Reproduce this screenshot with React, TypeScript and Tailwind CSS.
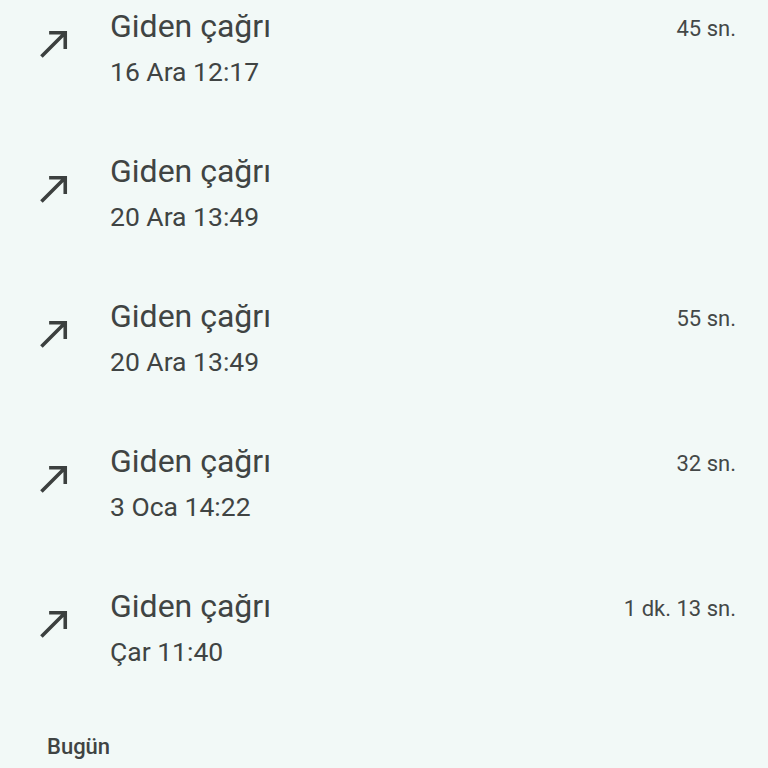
import React from "react";

type Call = {
  date: string;
  duration?: string;
};

const calls: Call[] = [
  { date: "16 Ara 12:17", duration: "45 sn." },
  { date: "20 Ara 13:49" },
  { date: "20 Ara 13:49", duration: "55 sn." },
  { date: "3 Oca 14:22", duration: "32 sn." },
  { date: "Çar 11:40", duration: "1 dk. 13 sn." },
];

const OutgoingIcon = () => (
  <svg viewBox="0 0 24 24" className="w-[43px] h-[43px]" fill="#3c403f">
    <path d="M9 5v2h6.59L4 18.59 5.41 20 17 8.41V15h2V5z" />
  </svg>
);

const App: React.FC = () => {
  return (
    <div
      className="w-[768px] h-[768px] overflow-hidden bg-[#f2f9f7] text-[#404443]"
      style={{ fontFamily: "Roboto, 'Noto Sans', sans-serif" }}
    >
      <div className="-mt-[24px]">
        {calls.map((call, index) => (
          <div
            key={index}
            className="flex items-start h-[145px] pt-[32px] pl-[33px] pr-[32px]"
          >
            <div className="mt-[14px] shrink-0">
              <OutgoingIcon />
            </div>
            <div className="ml-[34px] flex-1">
              <p className="text-[32px] leading-[36px]">Giden çağrı</p>
              <p className="text-[26.5px] leading-[30px] mt-[13px]">{call.date}</p>
            </div>
            {call.duration && (
              <p className="text-[22px] leading-[28px] mt-[7px] text-[#444847]">
                {call.duration}
              </p>
            )}
          </div>
        ))}
      </div>

      {/* Section header */}
      <p className="mt-[32px] pl-[47px] text-[22px] leading-[28px] font-medium text-[#404443]">
        Bugün
      </p>
    </div>
  );
};

export default App;
